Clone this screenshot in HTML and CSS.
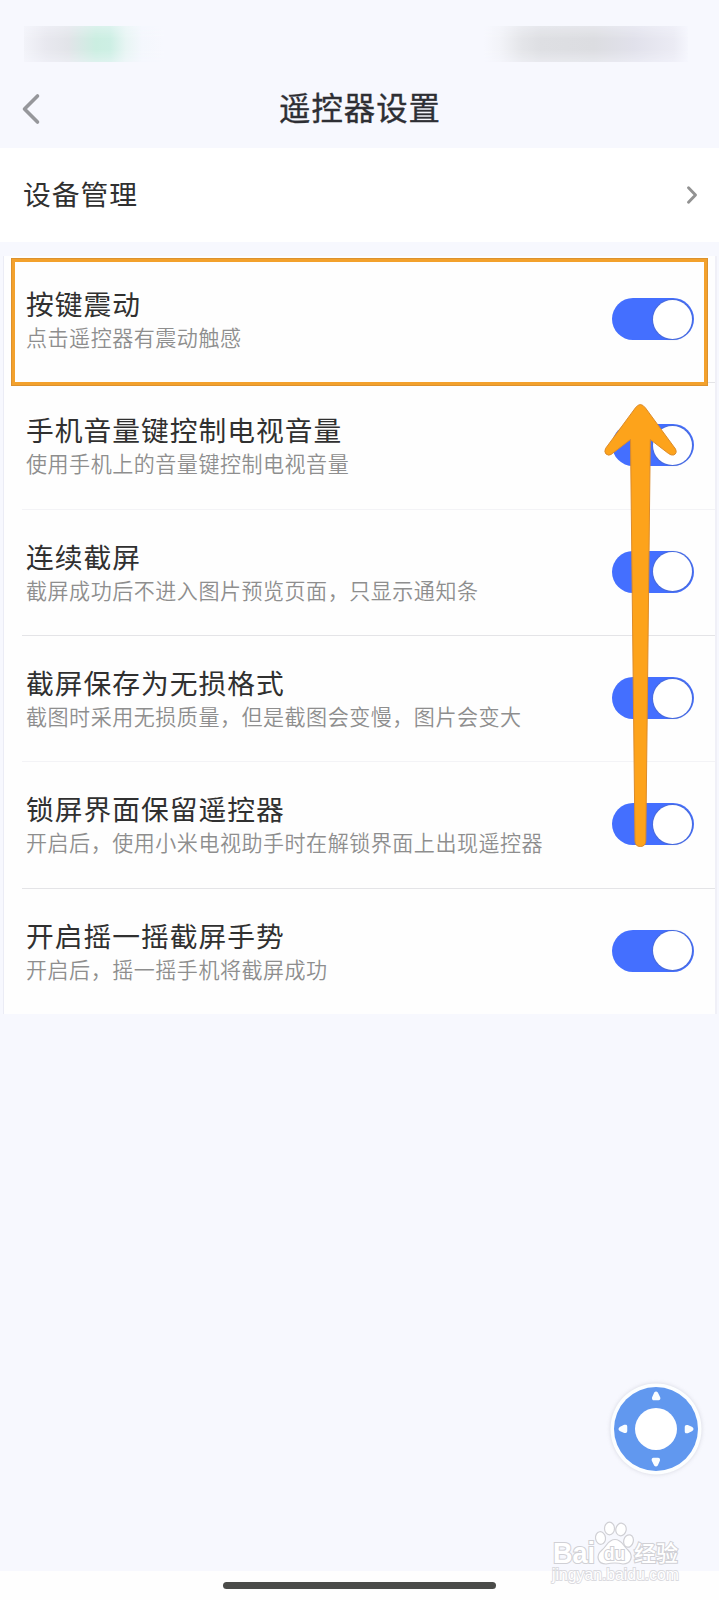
FILE: index.html
```html
<!DOCTYPE html>
<html lang="zh-CN">
<head>
<meta charset="utf-8">
<title>遥控器设置</title>
<link rel="stylesheet" href="styles.css">
</head>
<body>
<div class="screen">
  <div class="status"><div class="smudge smudge-left"></div><div class="smudge smudge-right"></div></div>
  <header class="nav">
    <svg class="back" width="20" height="32" viewBox="0 0 20 32"><path d="M16.500 3 3.500 16l13 13" fill="none" stroke="#96979b" stroke-width="3.600" stroke-linecap="round" stroke-linejoin="round"/></svg>
    <h1 class="nav-title">遥控器设置</h1>
  </header>
  <div class="device">
    <span class="device-label">设备管理</span>
    <svg class="more" width="12" height="20" viewBox="0 0 12 20"><path d="M2.500 2.700 9.500 10l-7 7.300" fill="none" stroke="#929292" stroke-width="2.900" stroke-linecap="round" stroke-linejoin="round"/></svg>
  </div>
  <main class="panel">
    <section class="row">
      <div><h2 class="title">按键震动</h2><p class="desc">点击遥控器有震动触感</p></div>
      <div class="switch"><div class="knob"></div></div>
    </section>
    <section class="row">
      <div><h2 class="title">手机音量键控制电视音量</h2><p class="desc">使用手机上的音量键控制电视音量</p></div>
      <div class="switch"><div class="knob"></div></div>
    </section>
    <section class="row faint">
      <div><h2 class="title">连续截屏</h2><p class="desc">截屏成功后不进入图片预览页面，只显示通知条</p></div>
      <div class="switch"><div class="knob"></div></div>
    </section>
    <section class="row">
      <div><h2 class="title">截屏保存为无损格式</h2><p class="desc">截图时采用无损质量，但是截图会变慢，图片会变大</p></div>
      <div class="switch"><div class="knob"></div></div>
    </section>
    <section class="row faint">
      <div><h2 class="title">锁屏界面保留遥控器</h2><p class="desc">开启后，使用小米电视助手时在解锁界面上出现遥控器</p></div>
      <div class="switch"><div class="knob"></div></div>
    </section>
    <section class="row">
      <div><h2 class="title">开启摇一摇截屏手势</h2><p class="desc">开启后，摇一摇手机将截屏成功</p></div>
      <div class="switch"><div class="knob"></div></div>
    </section>
    <div class="highlight"></div>
    <svg class="arrow" width="76" height="450" viewBox="0 0 76 450">
      <path d="M33.300 7 Q38.300 0 43.500 7 L73.500 48 Q75.500 52.500 71.500 54 Q69 54.500 66.500 52.500 L48.300 38.500 L43.800 440 Q43.500 445.500 38.300 445.500 Q33.200 445.500 33 440 L28.500 38.500 L9 53.500 Q6.500 55 4 53 Q2 51 3.500 47.500 Z" fill="#fda31b" stroke="#dc8b2a" stroke-width="1"/>
    </svg>
  </main>
  <svg class="fab" width="100" height="100" viewBox="0 0 100 100">
    <circle cx="50" cy="50" r="45.500" fill="#fcfeff"/>
    <circle cx="50" cy="50" r="42" fill="#6198ef"/>
    <circle cx="50" cy="50" r="21" fill="#fff"/>
    <g fill="#fafdff" stroke="#fafdff" stroke-width="1.500" stroke-linejoin="round">
      <path id="p" d="M48.800 14 46.800 18.500Q46.500 20.500 48 20.500H52.500Q54 20.500 53.500 18.500L51.300 14Q50 12.500 48.800 14Z"/>
      <use href="#p" transform="rotate(90 50 50)"/><use href="#p" transform="rotate(180 50 50)"/><use href="#p" transform="rotate(270 50 50)"/>
    </g>
  </svg>
  <footer class="bottom"><div class="home"></div></footer>
  <svg class="watermark" width="140" height="70" viewBox="0 0 140 70">
    <g fill="#fff" stroke="#d0d0d5" stroke-width="1.200">
      <text class="latin" x="3" y="44.500" font-size="30" textLength="42" lengthAdjust="spacingAndGlyphs">Bai</text>
      <ellipse cx="50.500" cy="20" rx="5" ry="6.300" transform="rotate(-8 50.500 20)"/>
      <ellipse cx="59.500" cy="10.500" rx="5" ry="6.300"/>
      <ellipse cx="71" cy="11.500" rx="5.200" ry="6.300" transform="rotate(10 71 11.500)"/>
      <ellipse cx="78.500" cy="23" rx="4.800" ry="6.300" transform="rotate(15 78.500 23)"/>
      <path d="M65 21.500C58 21.500 57 28 52 32C45 38 48 46 56 46Q65 44 73 46C81 46 84 38 78 32C73 28 72 21.500 65 21.500Z"/>
      <text class="latin" x="54" y="41.500" font-size="19" textLength="21" lengthAdjust="spacingAndGlyphs">du</text>
      <text class="cjk" x="84" y="42.500" font-size="22">经验</text>
      <text class="site" x="2" y="61.500" font-size="16.500" textLength="127" lengthAdjust="spacingAndGlyphs">jingyan.baidu.com</text>
    </g>
  </svg>
</div>
</body>
</html>
```
FILE: styles.css
```css
* { box-sizing: border-box; margin: 0; padding: 0; }
body { background: #f7f8fe; font-family: "Noto Sans CJK SC", sans-serif; }
.screen { position: relative; width: 719px; height: 1600px; display: flex; flex-direction: column; overflow: hidden; }
.status { height: 70px; padding: 26px 31px 8px 24px; display: flex; justify-content: space-between; }
.smudge { -webkit-mask-image: linear-gradient(rgba(0,0,0,.65), #000 35%, #000 65%, rgba(0,0,0,.6)); }
.smudge-left { width: 140px; background: linear-gradient(90deg, #f2f3f9 0, #e8e8ef 22px, #e2e4e9 44px, #cbeee1 72px, #cdefe4 86px, #e8f5f4 102px, #f4f7fd 118px, #f7f8fe 140px); }
.smudge-right { width: 204px; background: linear-gradient(90deg, #f7f8fe 0, #f2f3f8 16px, #e4e5e9 38px, #dedfe3 56px, #dcdde1 110px, #e1e1eb 150px, #ebebf4 190px, #f5f6fd 204px); }
.nav { height: 78px; display: grid; grid-template-columns: 60px 1fr 60px; align-items: center; }
.back { margin: -1px 0 0 21px; }
.nav-title { margin-top: -4px; padding-left: 1px; font-size: 31.400px; letter-spacing: 1px; line-height: 48px; font-weight: 400; text-align: center; color: #2e2f34; -webkit-text-stroke: .35px #2e2f34; }
.device { height: 94px; background: #fff; padding: 0 21px 0 23px; display: flex; align-items: center; justify-content: space-between; }
.device-label { margin-top: -4px; font-size: 27.750px; letter-spacing: 1px; line-height: 40px; color: #303030; }
.more { margin-top: -1px; }
.panel { position: relative; height: 758px; margin: 14px 2px 0 3px; background: #fefefe; border-left: 1px solid #ebecf5; border-right: 2px solid #f0f0f7; display: grid; grid-template-rows: repeat(6, 1fr); }
.row { display: flex; justify-content: space-between; padding: 29px 21px 0 22px; background: linear-gradient(#e4e4e7, #e4e4e7) 18px 0 / 100% 1px no-repeat; }
.row.faint { background-image: linear-gradient(#f3f3f6, #f3f3f6); }
.row:first-child { background: none; }
.title { font-size: 27.750px; letter-spacing: 1px; line-height: 37px; font-weight: 400; color: #303030; }
.desc { font-size: 21.060px; letter-spacing: .5px; line-height: 31px; font-weight: 350; color: #8e8e8e; }
.switch { width: 82px; height: 42px; margin-top: 13px; border-radius: 21px; background: #446fff; padding: 1.500px 2px; display: flex; justify-content: flex-end; }
.knob { width: 39px; height: 39px; border-radius: 50%; background: #fff; box-shadow: 0 0 1px 1px rgba(80, 100, 160, .4); }
.highlight { position: absolute; left: 7px; top: 2px; width: 697px; height: 128px; border: 4px solid #f3a12c; outline: 1px solid #dc922f; outline-offset: -1px; }
.arrow { position: absolute; left: 598px; top: 145px; }
.fab { position: absolute; left: 606px; top: 1379px; filter: drop-shadow(0 0 2px rgba(100, 100, 120, .22)); }
.bottom { margin-top: auto; height: 29px; background: #fefefe; padding-top: 11px; }
.home { width: 273px; height: 7px; margin: 0 auto; border-radius: 4px; background: #4a4b49; }
.watermark { position: absolute; left: 550px; top: 1518px; }
.latin { font-family: "Liberation Sans", sans-serif; font-weight: 700; paint-order: stroke; stroke-width: 2.200px; }
.site { font-family: "Liberation Sans", sans-serif; paint-order: stroke; stroke-width: 1.800px; stroke: #dadadf; }
.cjk { font-family: "Noto Sans CJK SC", sans-serif; font-weight: 500; paint-order: stroke; stroke-width: 2px; }
```
